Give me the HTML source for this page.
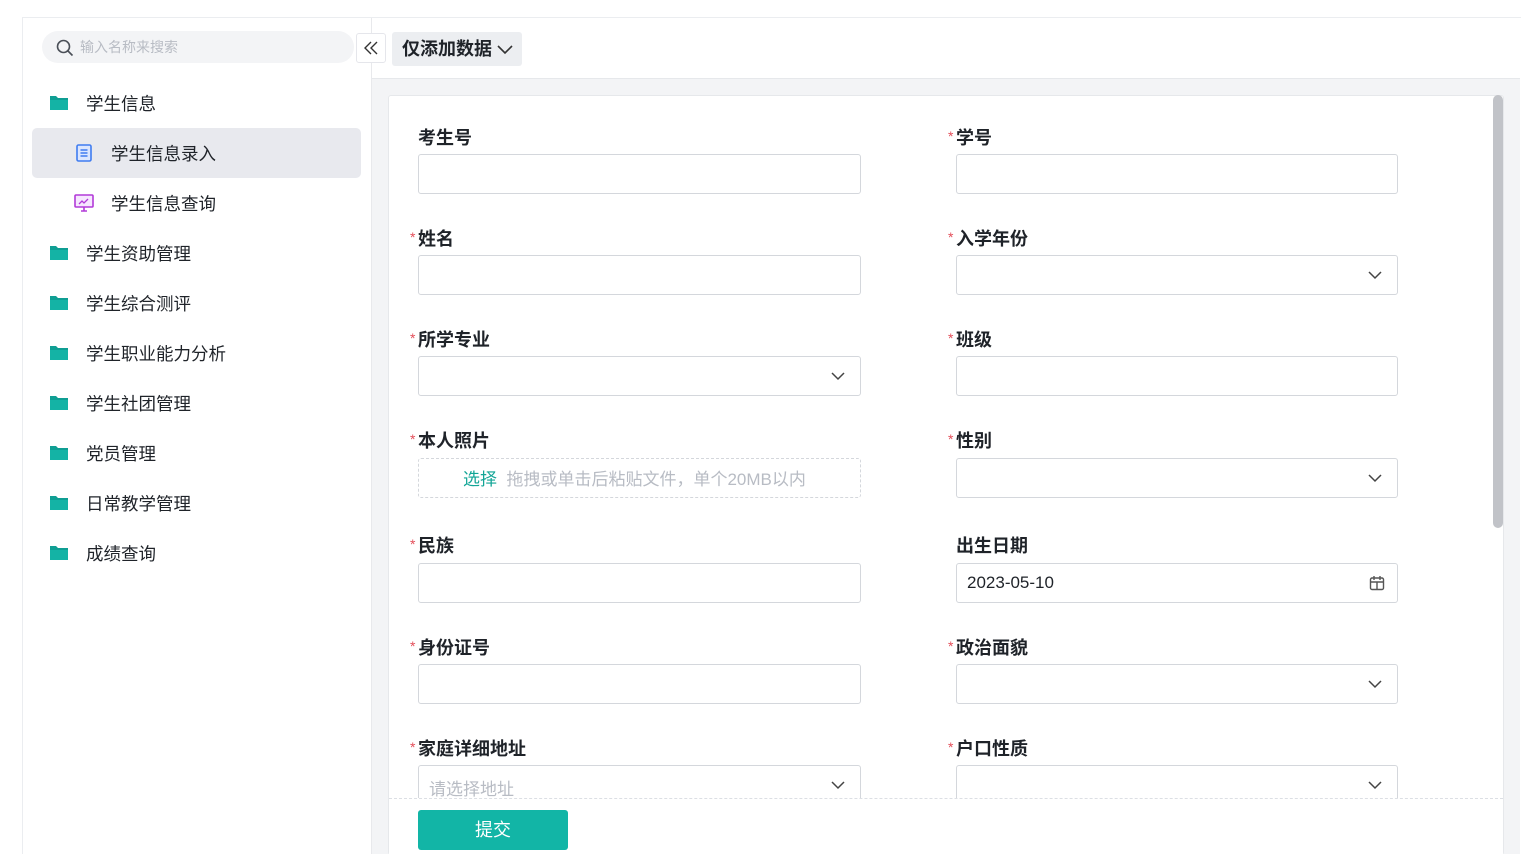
<!DOCTYPE html>
<html><head><meta charset="utf-8"><style>
*{box-sizing:border-box;margin:0;padding:0}
html,body{width:1530px;height:854px;overflow:hidden}
body{background:#fff;font-family:"Liberation Sans","Noto Sans CJK SC",sans-serif;position:relative;color:#1f2329}
.abs{position:absolute}
.frame{left:22px;top:17px;width:1499px;height:837px;border-top:1px solid #ebedf0;border-left:1px solid #ebedf0}
.side{left:22px;top:18px;width:350px;height:836px;border-right:1px solid #e8e9ec}
.search{left:42px;top:31px;width:312px;height:32px;background:#f3f4f6;border-radius:16px;font-size:14px;color:#b8bcc4;line-height:32px;padding-left:38px}
.coll{left:356px;top:33px;width:30px;height:30px;border:1px solid #e5e6eb;background:#fff;border-radius:3px;z-index:5}
.menu{font-size:17.5px;color:#1f2329;line-height:24px}
.act{left:32px;top:128px;width:329px;height:50px;background:#e8e9ee;border-radius:5px}
.hdr{left:372px;top:18px;width:1148px;height:61px;border-bottom:1px solid #e6e8eb;background:#fff}
.gray{left:372px;top:79px;width:1148px;height:780px;background:#f3f4f6}
.card{left:388px;top:95px;width:1116px;height:760px;background:#fff;border:1px solid #e6e8eb;border-radius:3px}
.lbl{font-size:18px;font-weight:bold;line-height:24px}
.lbl i{color:#e34d59;font-style:normal;font-weight:normal;font-size:14px;position:absolute;left:-8px;top:-2px}
.inp{width:443px;height:40px;border:1px solid #d4d7dc;border-radius:3px;background:#fff}
.chev{position:absolute;right:14px;top:13px}
.foot{left:389px;top:798px;width:1114px;height:60px;border-top:1px dashed #dcdfe4;background:#fff}
.btn{left:418px;top:810px;width:150px;height:40px;background:#12b5a6;border-radius:3px;color:#fff;font-size:18px;text-align:center;line-height:40px}
</style></head><body>
<div class="abs frame"></div>
<div class="abs side"></div>
<div class="abs search">输入名称来搜索</div>
<svg class="abs" style="left:56px;top:39px" width="18" height="18" viewBox="0 0 18 18"><circle cx="7.5" cy="7.5" r="6" fill="none" stroke="#4a4f57" stroke-width="1.6"/><path d="M12 12l4.5 4.5" stroke="#4a4f57" stroke-width="1.6"/></svg>
<div class="abs act"></div>
<div id="m"></div>
<script>
var items=[["学生信息",103,0],["学生信息录入",153,1],["学生信息查询",203,2],["学生资助管理",253,0],["学生综合测评",303,0],["学生职业能力分析",353,0],["学生社团管理",403,0],["党员管理",453,0],["日常教学管理",503,0],["成绩查询",553,0]];
var h="";
items.forEach(function(it){
 var y=it[1];
 if(it[2]==0){h+='<svg class="abs" style="left:50px;top:'+(y-8)+'px" width="18" height="15" viewBox="0 0 18 15"><path d="M0 1h6l2 2h10v12H0z" fill="#0f9e93"/><path d="M0 5h18v10H0z" fill="#14b3a5"/></svg><div class="abs menu" style="left:86px;top:'+(y-11)+'px">'+it[0]+'</div>';}
 else if(it[2]==1){h+='<svg class="abs" style="left:76px;top:'+(y-9)+'px" width="16" height="18" viewBox="0 0 16 18"><rect x="1" y="1" width="14" height="16" rx="1.5" fill="#dbe6ff" stroke="#3f7cf0" stroke-width="1.6"/><path d="M4.5 6h7M4.5 9h7M4.5 12h7" stroke="#3f7cf0" stroke-width="1.5"/></svg><div class="abs menu" style="left:111px;top:'+(y-11)+'px">'+it[0]+'</div>';}
 else {h+='<svg class="abs" style="left:74px;top:'+(y-9)+'px" width="20" height="18" viewBox="0 0 20 18"><rect x="1" y="1" width="18" height="12" rx="1" fill="#f6e6ff" stroke="#b23ad8" stroke-width="1.6"/><path d="M5 10l3-3 2 2 4-4" fill="none" stroke="#b23ad8" stroke-width="1.3"/><path d="M7 17h6M10 13v4" stroke="#b23ad8" stroke-width="1.6"/></svg><div class="abs menu" style="left:111px;top:'+(y-11)+'px">'+it[0]+'</div>';}
});
document.getElementById("m").innerHTML=h;
</script>
<div class="abs hdr"></div>
<div class="abs coll"><svg width="28" height="28" viewBox="0 0 28 28"><path d="M14 8l-6 6 6 6M20 8l-6 6 6 6" fill="none" stroke="#333" stroke-width="1.4"/></svg></div>
<div class="abs" style="left:392px;top:32px;width:130px;height:34px;background:#eceef1;border-radius:3px;font-size:18px;font-weight:bold;line-height:35px;padding-left:10px">仅添加数据<svg style="position:absolute;left:105px;top:11px" width="16" height="12" viewBox="0 0 16 12"><path d="M1 3l7 7 7-7" fill="none" stroke="#333" stroke-width="1.6"/></svg></div>
<div class="abs gray"></div>
<div class="abs card"></div>
<div class="abs" style="left:1493px;top:95px;width:10px;height:433px;background:#c1c3c8;border-radius:5px"></div>
<div id="f"></div>
<script>
var chev='<svg class="chev" width="16" height="12" viewBox="0 0 16 12"><path d="M2 3l6 6 6-6" fill="none" stroke="#444" stroke-width="1.5"/></svg>';
var F=[["考生号",0,137,154,"",0],["学号",1,137,154,"",1],["姓名",1,238,255,"",0],["入学年份",1,238,255,chev,1],["所学专业",1,339,356,chev,0],["班级",1,339,356,"",1],["性别",1,440,458,chev,1],["民族",1,545,563,"",0],["出生日期",0,545,563,"cal",1],["身份证号",1,647,664,"",0],["政治面貌",1,647,664,chev,1],["家庭详细地址",1,748,765,"addr",0],["户口性质",1,748,765,chev,1]];
var s="";
F.forEach(function(f){
 var x=f[5]?956:418;
 s+='<div class="abs lbl" style="left:'+x+'px;top:'+(f[2]-11)+'px">'+(f[1]?'<i>*</i>':'')+f[0]+'</div>';
 var inner=f[4];
 if(inner=="cal")inner='<span style="position:absolute;left:10px;top:9px;font-size:17px;color:#1f2329">2023-05-10</span><svg class="chev" style="top:11px;right:12px" width="16" height="16" viewBox="0 0 16 16"><rect x="1.5" y="3" width="13" height="11.5" rx="1.5" fill="none" stroke="#555" stroke-width="1.4"/><path d="M1.5 7h13M5 1v4M11 1v4M8 7v7.5" stroke="#555" stroke-width="1.4"/></svg>';
 if(inner=="addr")inner='<span style="position:absolute;left:10px;top:9px;font-size:17px;color:#b8bcc4">请选择地址</span>'+chev;
 s+='<div class="abs inp" style="left:'+x+'px;top:'+f[3]+'px;width:'+(f[5]?442:443)+'px">'+inner+'</div>';
});
s+='<div class="abs lbl" style="left:418px;top:429px"><i>*</i>本人照片</div>';
s+='<div class="abs" style="left:418px;top:458px;width:443px;height:40px;border:1px dashed #d4d7dc;border-radius:3px;font-size:17px;line-height:41px;padding-left:44px;color:#b8bcc4"><span style="color:#12a596">选择</span>&nbsp; 拖拽或单击后粘贴文件，单个20MB以内</div>';
document.getElementById("f").innerHTML=s;
</script>
<div class="abs foot"></div>
<div class="abs btn">提交</div>
</body></html>
